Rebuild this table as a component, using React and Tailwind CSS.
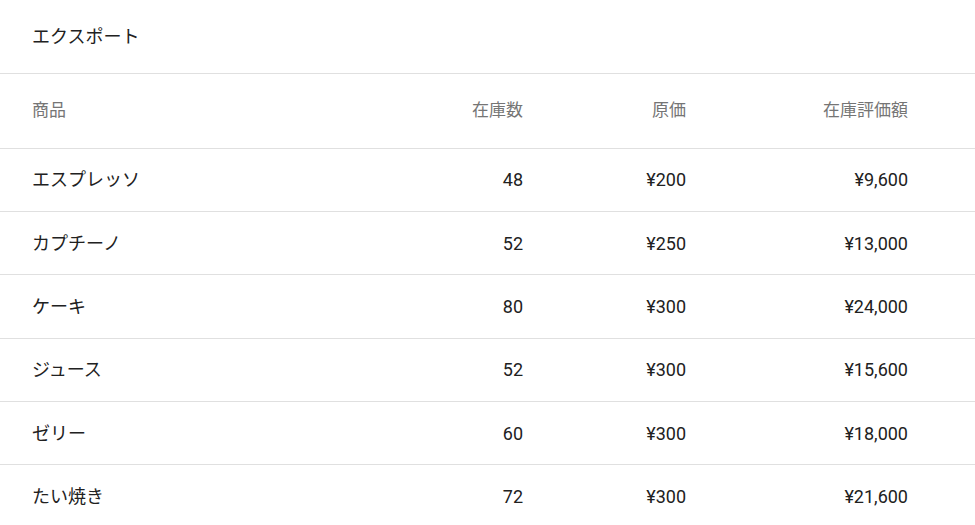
import React from 'react'

const ROWS = [
  ['エスプレッソ', '48', '¥200', '¥9,600'],
  ['カプチーノ', '52', '¥250', '¥13,000'],
  ['ケーキ', '80', '¥300', '¥24,000'],
  ['ジュース', '52', '¥300', '¥15,600'],
  ['ゼリー', '60', '¥300', '¥18,000'],
  ['たい焼き', '72', '¥300', '¥21,600'],
]

const font = { fontFamily: 'Roboto, "Noto Sans CJK JP", sans-serif' }

export default function App() {
  return (
    <div className="w-[975px] h-[525px] overflow-hidden bg-white" style={font}>
      <div className="h-[74px] flex items-center px-8 border-b border-[#e0e0e0] text-[18px] text-[#212121]">
        エクスポート
      </div>
      <div className="h-[74.5px] grid grid-cols-[391px_100px_163px_222px] items-center px-8 border-b border-[#e0e0e0] text-[17px] text-[#757575]">
        <div>商品</div>
        <div className="text-right">在庫数</div>
        <div className="text-right">原価</div>
        <div className="text-right">在庫評価額</div>
      </div>
      {ROWS.map(r => (
        <div key={r[0]} className="h-[63.4px] grid grid-cols-[391px_100px_163px_222px] items-center px-8 border-b border-[#e0e0e0] text-[18px] text-[#212121]">
          <div>{r[0]}</div>
          <div className="text-right">{r[1]}</div>
          <div className="text-right">{r[2]}</div>
          <div className="text-right">{r[3]}</div>
        </div>
      ))}
    </div>
  )
}
